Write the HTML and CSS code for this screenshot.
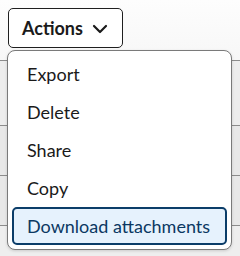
FILE: index.html
```html
<!DOCTYPE html>
<html>
<head>
<meta charset="utf-8">
<link rel="stylesheet" href="styles.css">
</head>
<body>
<div class="backdrop">
  <div class="row row-head"></div>
  <div class="row row-a"></div>
  <div class="row row-b"></div>
  <div class="row row-c"></div>
  <div class="row row-d"></div>
</div>
<div class="dropdown">
  <button class="trigger">Actions
    <svg class="chev" width="16" height="10" viewBox="0 0 16 10"><path d="M2 2 L8 8 L14 2" fill="none" stroke="#1a1a1a" stroke-width="2.2" stroke-linecap="round" stroke-linejoin="round"/></svg>
  </button>
  <ul class="menu">
    <li class="item">Export</li>
    <li class="item">Delete</li>
    <li class="item">Share</li>
    <li class="item">Copy</li>
    <li class="item active">Download attachments</li>
  </ul>
</div>
</body>
</html>
```
FILE: styles.css
```css
html, body { margin: 0; padding: 0; }
body {
  width: 240px; height: 256px; overflow: hidden; position: relative;
  background: #fbfbfb;
  font-family: "Lato", "Noto Sans", sans-serif;
}
.backdrop { display: flex; flex-direction: column; }
.row { border-bottom: 1px solid #8c8c8c; }
.row-head { height: 60px; background: linear-gradient(#fdfdfd, #f7f7f7); }
.row-a { height: 64px; background: #ededed; }
.row-b { height: 49px; background: #e8e8e8; }
.row-c { height: 49px; background: #e8e8e8; }
.row-d { height: 30px; background: #eeeeee; border-bottom: none; }

.dropdown { position: absolute; left: 8px; top: 8px; }
.trigger {
  box-sizing: border-box; width: 115px; height: 40px;
  display: flex; align-items: center; gap: 9px;
  padding: 0 0 0 13px;
  background: #ffffff; border: 1px solid #1f1f1f; border-radius: 5px;
  font-family: inherit; font-size: 18px; font-weight: 700; color: #1a1a1a;
}
.chev { margin-top: 1px; }
.menu {
  position: absolute; left: -1px; top: 42px;
  box-sizing: border-box; width: 225px; height: 200px;
  margin: 0; padding: 4px 4px 0 4px; list-style: none;
  background: #ffffff; border: 1px solid #7a7a7a; border-radius: 8px;
  display: flex; flex-direction: column; gap: 0;
  box-shadow: 0 1px 3px rgba(0,0,0,0.15);
}
.item {
  box-sizing: border-box; height: 38px;
  display: flex; align-items: center; padding-left: 13px;
  font-size: 18px; color: #1a1a1a;
  border: 2px solid transparent; border-radius: 5px;
}
.item.active {
  background: #e6f2fd; border-color: #0b3d69; color: #0b3862;
}
```
